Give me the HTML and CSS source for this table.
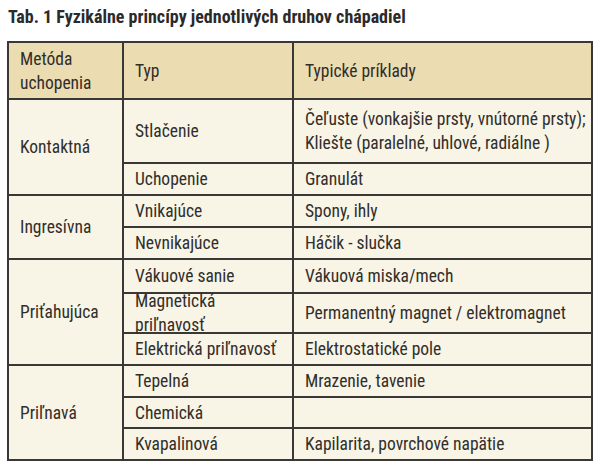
FILE: index.html
```html
<!DOCTYPE html>
<html lang="sk">
<head>
<meta charset="utf-8">
<title>Tab. 1</title>
<link rel="stylesheet" href="styles.css">
</head>
<body>
<div class="page">
  <h1 class="caption">Tab. 1 Fyzikálne princípy jednotlivých druhov chápadiel</h1>
  <div class="table">
    <div class="cell head">Metóda<br>uchopenia</div>
    <div class="cell head">Typ</div>
    <div class="cell head">Typické príklady</div>

    <div class="cell method span2">Kontaktná</div>
    <div class="cell">Stlačenie</div>
    <div class="cell">Čeľuste (vonkajšie prsty, vnútorné prsty);<br>Kliešte (paralelné, uhlové, radiálne )</div>
    <div class="cell">Uchopenie</div>
    <div class="cell">Granulát</div>

    <div class="cell method span2">Ingresívna</div>
    <div class="cell">Vnikajúce</div>
    <div class="cell">Spony, ihly</div>
    <div class="cell">Nevnikajúce</div>
    <div class="cell">Háčik - slučka</div>

    <div class="cell method span3">Priťahujúca</div>
    <div class="cell">Vákuové sanie</div>
    <div class="cell">Vákuová miska/mech</div>
    <div class="cell">Magnetická<br>priľnavosť</div>
    <div class="cell">Permanentný magnet / elektromagnet</div>
    <div class="cell">Elektrická priľnavosť</div>
    <div class="cell">Elektrostatické pole</div>

    <div class="cell method span3">Priľnavá</div>
    <div class="cell">Tepelná</div>
    <div class="cell">Mrazenie, tavenie</div>
    <div class="cell">Chemická</div>
    <div class="cell"></div>
    <div class="cell">Kvapalinová</div>
    <div class="cell">Kapilarita, povrchové napätie</div>
  </div>
</div>
</body>
</html>
```

FILE: styles.css
```css
html, body {
  margin: 0;
  padding: 0;
  background: #ffffff;
}

.page {
  padding: 6px 0 0 7px;
}

.caption {
  margin: 0 0 13px 1px;
  font-family: "Roboto Condensed", "Liberation Sans Narrow", "DejaVu Sans Condensed", sans-serif;
  font-weight: bold;
  font-size: 18px;
  line-height: 22px;
  letter-spacing: 0;
  color: #2a2a2a;
  white-space: nowrap;
}

.table {
  display: grid;
  grid-template-columns: 113px 168px 297px;
  grid-template-rows: 55px 62px 30px 30px 30px 32px 38px 30px 30px 29px 30px;
  gap: 2px;
  padding: 2px;
  width: max-content;
  background: #3a3836;
  font-family: "Roboto Condensed", "Liberation Sans Narrow", "DejaVu Sans Condensed", sans-serif;
  font-size: 17.5px;
  letter-spacing: 0;
  line-height: 24px;
  color: #302e2b;
}

.cell {
  display: flex;
  align-items: center;
  padding-left: 11px;
  background: #f8f4e6;
  white-space: nowrap;
}

.head {
  background: #ecdcb1;
}

.span2 {
  grid-row: span 2;
}

.span3 {
  grid-row: span 3;
}
```
